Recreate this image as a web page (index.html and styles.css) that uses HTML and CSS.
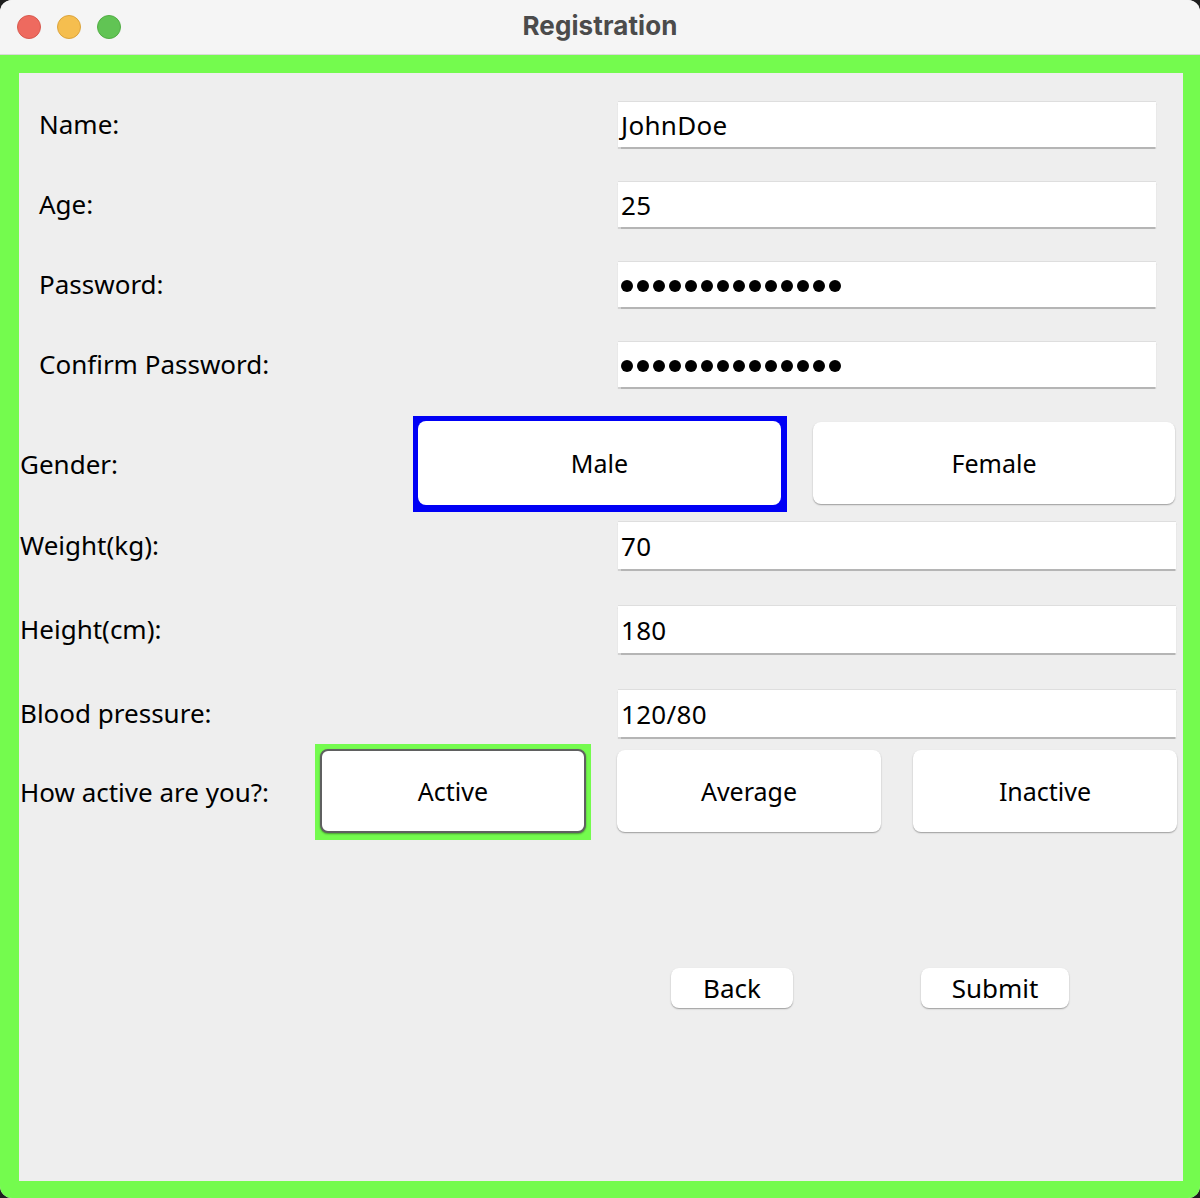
FILE: index.html
```html
<!DOCTYPE html>
<html>
<head>
<meta charset="utf-8">
<title>Registration</title>
<link rel="stylesheet" href="styles.css">
</head>
<body>
<div class="window">
  <div class="titlebar">
    <div class="lights">
      <span class="light red"></span>
      <span class="light yellow"></span>
      <span class="light green"></span>
    </div>
    <div class="title">Registration</div>
    <div></div>
  </div>
  <div class="frame">
    <div class="content">
      <div class="sec1">
        <div class="row1"><div class="lbl1">Name:</div><div class="field">JohnDoe</div></div>
        <div class="row1"><div class="lbl1">Age:</div><div class="field">25</div></div>
        <div class="row1"><div class="lbl1">Password:</div><div class="field dots"><span></span><span></span><span></span><span></span><span></span><span></span><span></span><span></span><span></span><span></span><span></span><span></span><span></span><span></span></div></div>
        <div class="row1"><div class="lbl1">Confirm Password:</div><div class="field dots"><span></span><span></span><span></span><span></span><span></span><span></span><span></span><span></span><span></span><span></span><span></span><span></span><span></span><span></span></div></div>
      </div>
      <div class="sec2">
        <div class="row-gender">
          <div class="lbl2 w-gender">Gender:</div>
          <div class="sel-blue"><div class="btn btn-plain">Male</div></div>
          <div class="btn btn-female">Female</div>
        </div>
        <div class="row2 first"><div class="lbl2 w-field">Weight(kg):</div><div class="field field2">70</div></div>
        <div class="row2"><div class="lbl2 w-field">Height(cm):</div><div class="field field2">180</div></div>
        <div class="row2"><div class="lbl2 w-field">Blood pressure:</div><div class="field field2">120/80</div></div>
        <div class="row-active">
          <div class="lbl2 w-active">How active are you?:</div>
          <div class="sel-green"><div class="btn btn-active">Active</div></div>
          <div class="btn btn-avg">Average</div>
          <div class="btn btn-inactive">Inactive</div>
        </div>
        <div class="row-bottom">
          <div class="btn btn-small btn-back">Back</div>
          <div class="btn btn-small btn-submit">Submit</div>
        </div>
      </div>
    </div>
  </div>
</div>
</body>
</html>
```

FILE: styles.css
```css
* { box-sizing: border-box; }
html, body { margin: 0; padding: 0; }
body {
  background: #1e1e1e;
  width: 1200px;
  height: 1198px;
  overflow: hidden;
  font-family: "Noto Sans", "DejaVu Sans", sans-serif;
  color: #000;
}
.window {
  width: 1200px;
  height: 1198px;
  border-radius: 12px;
  overflow: hidden;
  background: #eeeeee;
}
.titlebar {
  height: 55px;
  background: #f5f5f5;
  display: grid;
  grid-template-columns: 1fr auto 1fr;
  align-items: center;
  border-bottom: 1px solid #d9d9d9;
}
.lights {
  display: flex;
  gap: 16px;
  padding-left: 17px;
}
.light {
  width: 24px;
  height: 24px;
  border-radius: 50%;
  display: block;
}
.light.red { background: #ee6a5f; border: 1px solid #d85a4f; }
.light.yellow { background: #f5be4f; border: 1px solid #dca43c; }
.light.green { background: #61c454; border: 1px solid #52ad45; }
.title {
  font-family: Inter, "Liberation Sans", sans-serif;
  font-weight: 700;
  font-size: 26px;
  color: #4b4b4b;
  letter-spacing: 0.1px;
  margin-top: -3px;
}
.frame {
  height: 1143px;
  border-style: solid;
  border-color: #74fb4e;
  border-width: 18px 17px 17px 19px;
  background: #eeeeee;
}
.content {
  height: 100%;
  background: #eeeeee;
  font-size: 26px;
}
.sec1 { padding-top: 28px; }
.row1 {
  display: flex;
  align-items: center;
  height: 46px;
  margin-bottom: 34px;
}
.row1:last-child { margin-bottom: 0; }
.lbl1 {
  width: 599px;
  padding-left: 20px;
  flex: none;
}
.field {
  width: 538px;
  height: 46px;
  background: #fff;
  border-top: 1px solid #dedede;
  box-shadow: 0 1.5px 1px #b5b5b5;
  display: flex;
  align-items: center;
  padding-left: 3px;
  font-size: 26px;
  letter-spacing: 0.3px;
}
.dots { gap: 4px; padding-left: 3px; padding-top: 2px; }
.dots span {
  width: 12px;
  height: 12px;
  border-radius: 50%;
  background: #000;
  display: block;
}
.sec2 { padding-top: 29px; }
.lbl2 { flex: none; padding-left: 1px; }
.w-gender { width: 394px; }
.w-field { width: 599px; }
.w-active { width: 296px; }
.row-gender, .row-active {
  display: flex;
  align-items: center;
  height: 96px;
}
.btn {
  background: #fff;
  border-radius: 8px;
  display: flex;
  align-items: center;
  justify-content: center;
  font-size: 25px;
  box-shadow: 0 1px 1.5px rgba(0,0,0,0.35);
  flex: none;
}
.sel-blue {
  width: 374px;
  height: 96px;
  background: #0000f5;
  padding: 5px 6px 7px 5px;
  flex: none;
}
.btn-plain {
  width: 100%;
  height: 100%;
  box-shadow: none;
}
.btn-female {
  width: 362px;
  height: 82px;
  margin-left: 26px;
  margin-top: -2px;
}
.row2 {
  display: flex;
  align-items: center;
  height: 48px;
  margin-top: 36px;
}
.row2.first { margin-top: 9px; }
.field2 { width: 558px; height: 48px; }
.row-active { margin-top: 7px; }
.sel-green {
  width: 276px;
  height: 96px;
  background: #74fb4e;
  padding: 5px 5px 7px 5px;
  flex: none;
}
.btn-active {
  width: 100%;
  height: 100%;
  border: 2px solid #5f6060;
  box-shadow: 0 1px 2px rgba(0,0,0,0.4);
}
.btn-avg {
  width: 264px;
  height: 82px;
  margin-left: 26px;
  margin-top: -2px;
}
.btn-inactive {
  width: 264px;
  height: 82px;
  margin-left: 32px;
  margin-top: -2px;
}
.row-bottom {
  display: flex;
  margin-top: 128px;
  padding-left: 652px;
}
.btn-small { height: 40px; font-size: 26px; }
.btn-back { width: 122px; }
.btn-submit { width: 148px; margin-left: 128px; }
```
